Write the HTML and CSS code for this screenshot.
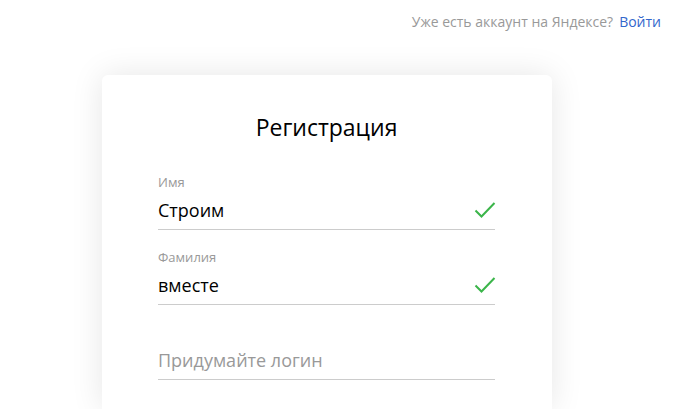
FILE: index.html
```html
<!DOCTYPE html>
<html lang="ru">
<head>
<meta charset="utf-8">
<link rel="stylesheet" href="styles.css">
</head>
<body>
<header class="top">
  <span class="top-q">Уже есть аккаунт на Яндексе?</span>
  <a class="top-link" href="#">Войти</a>
</header>
<main class="card">
  <h1 class="title">Регистрация</h1>
  <div class="field">
    <div class="label">Имя</div>
    <div class="row">
      <span class="value">Строим</span>
      <svg class="check" width="22" height="18" viewBox="0 0 22 18"><path d="M1.5 9.5 L7.5 15.5 L20.5 2" fill="none" stroke="#3bb54a" stroke-width="2"/></svg>
    </div>
  </div>
  <div class="field">
    <div class="label">Фамилия</div>
    <div class="row">
      <span class="value">вместе</span>
      <svg class="check" width="22" height="18" viewBox="0 0 22 18"><path d="M1.5 9.5 L7.5 15.5 L20.5 2" fill="none" stroke="#3bb54a" stroke-width="2"/></svg>
    </div>
  </div>
  <div class="field">
    <div class="label"></div>
    <div class="row">
      <span class="value placeholder">Придумайте логин</span>
    </div>
  </div>
</main>
</body>
</html>
```
FILE: styles.css
```css
html, body {
  margin: 0;
  padding: 0;
  background: #fff;
  font-family: "Open Sans", "Noto Sans", Arial, sans-serif;
  overflow: hidden;
  height: 409px;
}
.top {
  display: flex;
  justify-content: flex-end;
  gap: 6px;
  padding: 12px 28px 0 0;
  font-size: 14px;
  line-height: 20px;
  height: 63px;
  box-sizing: border-box;
}
.top-q { color: #999; }
.top-link { color: #3366cc; text-decoration: none; }
.card {
  margin-left: 102px;
  width: 450px;
  height: 334px;
  box-sizing: border-box;
  padding: 34px 57px 0 56px;
  background: #fff;
  border-radius: 6px 6px 0 0;
  box-shadow: 0 0 32px rgba(0,0,0,0.1);
  margin-top: 12px;
}
.title {
  margin: 0;
  text-align: center;
  font-weight: 400;
  font-size: 23px;
  line-height: 36px;
  color: #000;
}
.field {
  height: 75px;
  box-sizing: border-box;
  display: flex;
  flex-direction: column;
}
.title + .field { margin-top: 28px; }
.label {
  font-size: 13px;
  line-height: 18px;
  color: #999;
  height: 18px;
}
.row {
  display: flex;
  align-items: center;
  justify-content: space-between;
  height: 38px;
  border-bottom: 1px solid #ccc;
}
.value {
  font-size: 18px;
  color: #000;
}
.placeholder { color: #999; }
.check { display: block; margin-right: -1px; }
```
